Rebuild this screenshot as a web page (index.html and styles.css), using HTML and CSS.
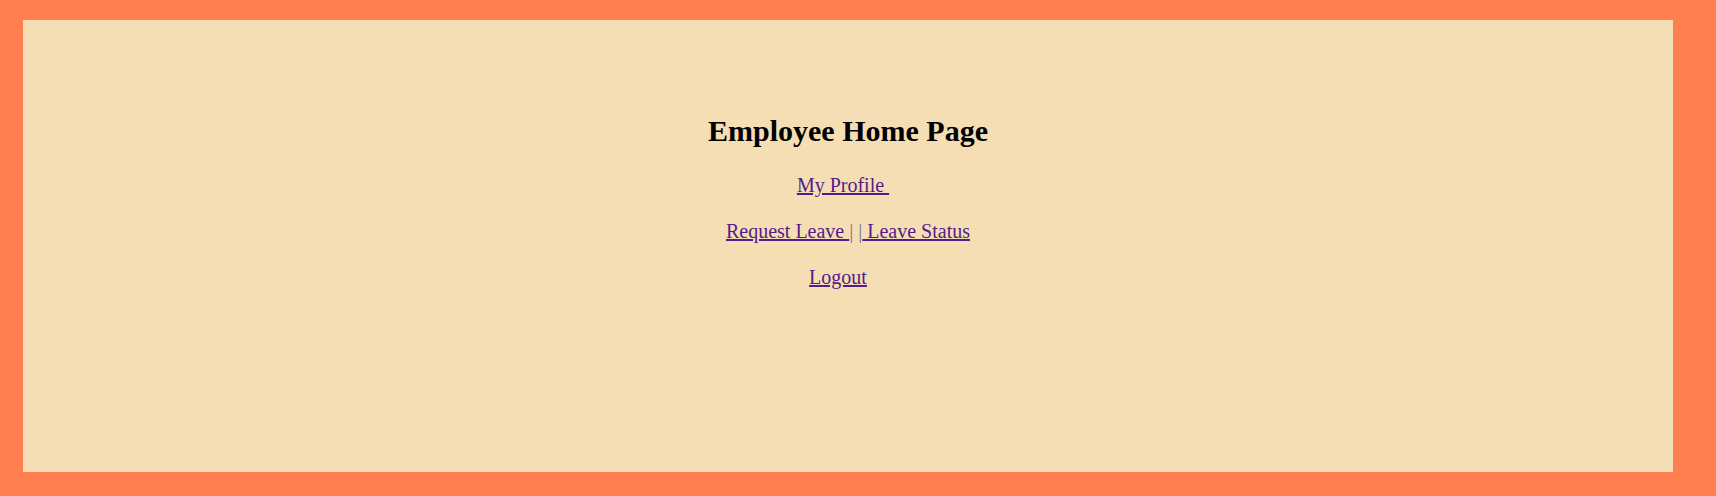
FILE: index.html
```html
<!DOCTYPE html>
<html>
<head>
<meta charset="utf-8">
<title>Employee Home Page</title>
<link rel="stylesheet" href="styles.css">
</head>
<body>
<div class="panel">
  <h2 class="title">Employee Home Page</h2>
  <p class="row"><a href="#" class="link">My Profile </a>&nbsp;&nbsp;</p>
  <p class="row"><a href="#" class="link">Request Leave </a><span class="sep">| |</span><a href="#" class="link"> Leave Status</a></p>
  <p class="row"><a href="#" class="link">Logout</a>&nbsp;&nbsp;&nbsp;&nbsp;</p>
</div>
</body>
</html>
```

FILE: styles.css
```css
html {
  background: #ff7f50;
}
body {
  margin: 20px 0 0 23px;
  background: #ff7f50;
  font-family: "Liberation Serif", "Times New Roman", serif;
  color: #000;
}
.panel {
  width: 1650px;
  height: 452px;
  box-sizing: border-box;
  background: #f5deb3;
  padding-top: 94px;
  text-align: center;
}
.title {
  margin: 0;
  font-size: 30px;
  line-height: 34px;
  font-weight: bold;
}
.row {
  margin: 23px 0 0;
  font-size: 20px;
  line-height: 23px;
  white-space: pre;
}
.title + .row {
  margin-top: 26px;
}
.sep {
  color: #6f7596;
}
.link {
  color: #551a8b;
  text-decoration: underline;
}
```
